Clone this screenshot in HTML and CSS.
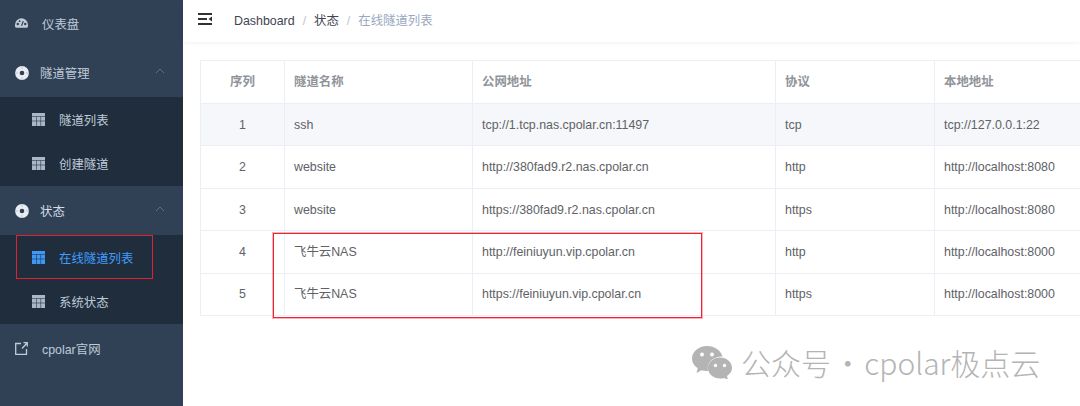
FILE: index.html
```html
<!DOCTYPE html>
<html lang="zh-CN">
<head>
<meta charset="utf-8">
<title>在线隧道列表</title>
<link rel="stylesheet" href="styles.css">
</head>
<body>
<div class="app">
  <svg width="0" height="0" class="defs">
    <defs>
      <symbol id="grid" viewBox="0 0 13 13">
        <path d="M0 0h13v13H0z" fill="currentColor" opacity=".95"/>
        <path d="M0 3.5h13M0 8h13M4.5 3.5V13M8.7 3.5V13" stroke="#1f2d3d" stroke-opacity=".55" stroke-width="1" fill="none"/>
      </symbol>
      <symbol id="ring" viewBox="0 0 14 14">
        <circle cx="7" cy="7" r="6.9" fill="#e9edf2"/>
        <circle cx="7" cy="7" r="2.3" fill="#304156"/>
        <path d="M7 0v3M7 11v3M0 7h3M11 7h3" stroke="#a9c3dc" stroke-width=".8"/>
      </symbol>
      <symbol id="chev" viewBox="0 0 10 6">
        <path d="M1 5l4-4 4 4" fill="none" stroke="#5c6f84" stroke-width="1"/>
      </symbol>
    </defs>
  </svg>
  <aside class="sidebar">
    <a class="item item-first"><svg class="ico-dash" viewBox="0 0 14 10"><path d="M7 0a7 7 0 0 0-7 7v1.500A1.500 1.500 0 0 0 1.500 10h11A1.500 1.500 0 0 0 14 8.500V7a7 7 0 0 0-7-7z" fill="#bfcbd9"/><circle cx="3" cy="6" r="1.300" fill="#304156"/><circle cx="11" cy="6" r="1.300" fill="#304156"/><circle cx="5" cy="3" r="1" fill="#304156"/><path d="M7 8l2-5" stroke="#304156" stroke-width="1.300"/></svg><span class="label-a">仪表盘</span></a>
    <a class="item"><svg class="ico-ring"><use href="#ring"/></svg><span class="label-b">隧道管理</span><svg class="chev"><use href="#chev"/></svg></a>
    <div class="submenu">
      <a class="sub"><svg class="ico-grid"><use href="#grid"/></svg><span>隧道列表</span></a>
      <a class="sub"><svg class="ico-grid"><use href="#grid"/></svg><span>创建隧道</span></a>
    </div>
    <a class="item"><svg class="ico-ring"><use href="#ring"/></svg><span class="label-b label-on">状态</span><svg class="chev"><use href="#chev"/></svg></a>
    <div class="submenu">
      <a class="sub sub-active"><svg class="ico-grid"><use href="#grid"/></svg><span>在线隧道列表</span></a>
      <a class="sub"><svg class="ico-grid"><use href="#grid"/></svg><span>系统状态</span></a>
    </div>
    <a class="item"><svg class="ico-ext" viewBox="0 0 13 13"><path d="M6 1.500H.7v10.800h10.800V7M7 6.500L12.300.7M8.500.7h3.800v3.800" fill="none" stroke="#bfcbd9" stroke-width="1.300"/></svg><span class="label-a">cpolar官网</span></a>
  </aside>
  <main class="main">
    <header class="topbar">
      <svg class="hamburger" viewBox="0 0 14 12"><path d="M0 1h14M0 6h9M0 11h14" stroke="#303133" stroke-width="1.800"/><path d="M14 3.500v5L10.500 6z" fill="#303133"/></svg>
      <nav class="crumbs"><span>Dashboard</span><i>/</i><span>状态</span><i>/</i><span class="crumb-last">在线隧道列表</span></nav>
    </header>
    <section class="content">
      <table class="table">
        <colgroup><col class="c1"><col class="c2"><col class="c3"><col class="c4"><col class="c5"></colgroup>
        <thead>
          <tr><th class="center">序列</th><th>隧道名称</th><th>公网地址</th><th>协议</th><th>本地地址</th></tr>
        </thead>
        <tbody>
          <tr class="striped"><td class="center">1</td><td>ssh</td><td>tcp://1.tcp.nas.cpolar.cn:11497</td><td>tcp</td><td>tcp://127.0.0.1:22</td></tr>
          <tr class="tall"><td class="center">2</td><td>website</td><td>http://380fad9.r2.nas.cpolar.cn</td><td>http</td><td>http://localhost:8080</td></tr>
          <tr><td class="center">3</td><td>website</td><td>https://380fad9.r2.nas.cpolar.cn</td><td>https</td><td>http://localhost:8080</td></tr>
          <tr class="tall"><td class="center">4</td><td>飞牛云NAS</td><td>http://feiniuyun.vip.cpolar.cn</td><td>http</td><td>http://localhost:8000</td></tr>
          <tr class="last"><td class="center">5</td><td>飞牛云NAS</td><td>https://feiniuyun.vip.cpolar.cn</td><td>https</td><td>http://localhost:8000</td></tr>
        </tbody>
      </table>
    </section>
  </main>
  <div class="box-side"></div>
  <div class="box-table"></div>
  <div class="watermark">
    <svg class="wechat" viewBox="0 0 40 33"><path d="M15 0C6.700 0 0 5.600 0 12.500c0 4 2.200 7.400 5.700 9.700L4.500 27l5-2.700c1.700.5 3.500.8 5.500.8h1.200a10 10 0 0 1-.4-2.900C15.800 15.500 22 10.500 29.500 10.500h1C28.900 4.500 22.600 0 15 0z" fill="#b4b4b4"/><path d="M40 22c0-6-5.500-10.500-12-10.500S16 16 16 22s5.500 10.500 12 10.500c1.500 0 2.800-.2 4-.6l4 1.900-1-3.900c3-2 5-4.600 5-7.900z" fill="#b4b4b4"/><circle cx="10" cy="8.500" r="2" fill="#fff"/><circle cx="20" cy="8.500" r="2" fill="#fff"/><circle cx="23.500" cy="19.500" r="1.700" fill="#fff"/><circle cx="32.500" cy="19.500" r="1.700" fill="#fff"/></svg>
    <span>公众号 · cpolar极点云</span>
  </div>
</div>
</body>
</html>
```
FILE: styles.css
```css
* { box-sizing: border-box; }
html, body { margin: 0; padding: 0; background: #fff; overflow: hidden; }
body { font-family: "Liberation Sans", "Noto Sans CJK SC", sans-serif; }
.defs { position: absolute; }
.app { position: relative; width: 1080px; height: 406px; display: flex; overflow: hidden; }

.sidebar { width: 183px; height: 406px; flex: none; background: #304156; display: flex; flex-direction: column; font-size: 12.400px; line-height: 16px; color: #bfcbd9; }
.item { height: 49px; display: flex; align-items: center; padding: 2px 0 0 15px; position: relative; flex: none; }
.item-first { height: 48px; }
.label-a { margin-left: 14px; }
.label-b { margin-left: 11px; }
.label-on { color: #d5dde6; }
.ico-dash { width: 13px; height: 10px; margin-top: -4px; }
.ico-ring { width: 14px; height: 14px; flex: none; margin-top: -2px; }
.ico-ext { width: 13px; height: 13px; margin-top: -2px; }
.chev { width: 10px; height: 6px; margin-left: auto; margin-right: 18px; margin-top: -5px; }
.submenu { background: #1f2d3d; height: 89px; display: flex; flex-direction: column; flex: none; }
.sub { height: 44.500px; display: flex; align-items: center; padding: 3px 0 0 32px; }
.sub span { margin-left: 14px; }
.ico-grid { width: 13px; height: 13px; color: #b4bfcc; margin-top: -3px; flex: none; }
.sub-active { color: #409eff; }
.sub-active .ico-grid { color: #409eff; }

.main { flex: 1; min-width: 0; display: flex; flex-direction: column; }
.topbar { height: 42px; flex: none; display: flex; align-items: center; padding-left: 15px; background: #fff; box-shadow: 0 1px 4px rgba(0, 21, 41, .06); }
.hamburger { width: 14px; height: 12px; margin-top: -4px; }
.crumbs { margin-left: 22px; font-size: 12.400px; line-height: 16px; color: #3f4450; }
.crumbs i { font-style: normal; color: #c0c4cc; margin: 0 8px; }
.crumb-last { color: #97a8be; }

.content { padding: 18px 0 0 17px; }
.table { width: 900px; table-layout: fixed; border-collapse: collapse; font-size: 12.400px; line-height: 16px; color: #606266; }
.c1 { width: 84px; } .c2 { width: 188px; } .c3 { width: 303px; } .c4 { width: 159px; } .c5 { width: 166px; }
.table th, .table td { border: 1px solid #ebeef5; padding: 0 0 0 9px; text-align: left; height: 42px; }
.table thead th { height: 43px; font-weight: bold; color: #909399; }
.table .tall td { height: 43px; }
.table .center { text-align: center; padding: 0; }
.table .last td { padding-bottom: 1px; }
.striped td { background: #f5f7fa; }

.box-side { position: absolute; left: 16px; top: 235px; width: 137px; height: 44px; border: 1px solid #e0212e; pointer-events: none; }
.box-table { position: absolute; left: 273px; top: 233px; width: 429px; height: 85px; border: 1px solid #ee2433; box-shadow: 0 0 0 1px rgba(238, 36, 51, .35); pointer-events: none; }

.watermark { position: absolute; left: 692px; top: 340px; display: flex; align-items: center; color: #b4b4b4; font-size: 30px; word-spacing: -5px; font-family: "Noto Sans CJK SC", sans-serif; font-weight: 300; white-space: nowrap; }
.wechat { width: 40px; height: 33px; margin-right: 9px; flex: none; }
```
